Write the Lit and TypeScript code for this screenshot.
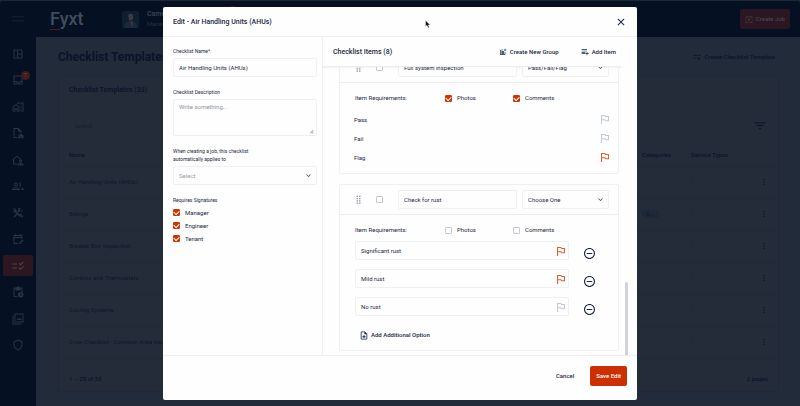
import { LitElement, html, css, svg, nothing, TemplateResult } from "lit";
import { customElement, property } from "lit/decorators.js";
import { classMap } from "lit/directives/class-map.js";

const paths: Record<string, string> = {
  flag: "M14 6l-1-2H5v17h2v-7h5l1 2h7V6h-6zm4 8h-4l-1-2H7V6h5l1 2h5v6z",
  group: "M17 19H5V7h7V5H5c-1.1 0-2 .9-2 2v12c0 1.1.9 2 2 2h12c1.1 0 2-.9 2-2v-7h-2zM19 2h-2v3h-3v2h3v3h2V7h3V5h-3zM7 9h8v2H7zM7 12h8v2H7zM7 15h8v2H7z",
  addItem: "M2 4h16v2H2zM2 8h16v2H2zM2 12h11v2H2zM2 16h11v2H2zM17 12h2v4h4v2h-4v4h-2v-4h-3v-2h3z",
  noteAdd: "M14 2H6c-1.1 0-2 .9-2 2v16c0 1.1.9 2 2 2h12c1.1 0 2-.9 2-2V8l-6-6zM6 20V4h7v5h5v11H6zM13 11h-2v3H8v2h3v3h2v-3h3v-2h-3z",
  minus: "M7 11v2h10v-2H7zm5-9C6.48 2 2 6.48 2 12s4.48 10 10 10 10-4.48 10-10S17.52 2 12 2zm0 18c-4.41 0-8-3.59-8-8s3.59-8 8-8 8 3.59 8 8-3.59 8-8 8z",
  close: "M19 6.4L17.6 5 12 10.6 6.4 5 5 6.4 10.6 12 5 17.6 6.4 19 12 13.4 17.6 19 19 17.6 13.4 12z",
  chevron: "M16.6 8.6L12 13.2 7.4 8.6 6 10l6 6 6-6z",
  drag: "M7 2h3v3H7zM14 2h3v3h-3zM7 8h3v3H7zM14 8h3v3h-3zM7 14h3v3H7zM14 14h3v3h-3zM7 20h3v3H7zM14 20h3v3h-3z",
  more: "M10 3h4v4h-4zM10 10h4v4h-4zM10 17h4v4h-4z",
  resize: "M20 8l2 2L10 22l-2-2zM20 16l2 2-4 4-2-2z",
  filter: "M10 18h4v-2h-4v2zM1 5v2h22V5H1zm4 7h14v-2H5v2z",
  menu: "M0 7h24v1.500H0zM0 15h24v1.500H0z",
  dashboard: "M3 3h18v18H3zM5 5v14h5V5zM12 5v6h7V5zM12 13v6h7v-6z",
  inbox: "M3 3h18v18H3zM5 5v9h4c.5 1.500 1.500 2.500 3 2.500s2.500-1 3-2.500h4V5zM5 16v3h14v-3h-2.500c-1 1.600-2.600 2.500-4.500 2.500S8.500 17.600 7.500 16z",
  homeWork: "M1 11.500L8 6l7 5.500V21H9v-5H7v5H1zM3 12.500V19h2v-5h6v5h2v-6.500L8 8.500zM10 3h13v18h-6v-2h4V5h-9v2l-2-1.500zM17 7h2v2h-2zM17 11h2v2h-2zM17 15h2v2h-2z",
  fileHome: "M3 2h10l6 6v4h-2V9h-5V4H5v16h6v2H3zM13 17l5-4 5 4v6h-4v-4h-2v4h-4z",
  homePerson: "M1 11L10 3l9 8-1.500 1.200L10 5.500 4 11v8h6v2H2v-8zM17 11a3 3 0 110 6 3 3 0 010-6zM17 13a1 1 0 100 2 1 1 0 000-2zM11 22c0-3 3-4 6-4s6 1 6 4v1H11zM13 21h8c-1-1.500-7-1.500-8 0z",
  people: "M8 5a4 4 0 110 8 4 4 0 010-8zm0 2a2 2 0 100 4 2 2 0 000-4zM0 20c0-4 4-5.500 8-5.500s8 1.500 8 5.500zM2 18h12c-1.500-2-10.500-2-12 0zM14 5a4 4 0 110 8v-2a2 2 0 000-4zM17 15c4 .5 7 2 7 5h-5v-2h2c-.5-1-2-1.500-4-2z",
  tools: "M2 4l3-2 4 4v3l9 9-2 2-9-9H5L1 7l3 1 2-2zM22 6l-3 3-3-1-1-3 3-3c-4-1-7 1-6 5l-2 2 2 2 2-2c4 1 6-1 5-3zM3 19l6-6 2 2-6 6zM15 14l2-1 6 6-2 3z",
  calendar: "M3 4h3V2h2v2h8V2h2v2h3v8h-2V10H5v10h7v2H3zM5 6v2h14V6zM14 20l7-7 2 2-7 7h-2z",
  checks: "M1 7h9v2H1zM1 15h9v2H1zM13 7l1.500-1.500L17 8l5-5 1.500 1.500L17 11zM13 16l1.500-1.500L17 17l5-5 1.500 1.500L17 20z",
  clipboard: "M3 3h5l2-2h4l2 2h5v9h-2V5h-2v4H7V5H5v15h6v2H3zM17.500 12a5.500 5.500 0 110 11 5.500 5.500 0 010-11zM17 14v4l3 2 .7-1-2.200-1.500V14z",
  photos: "M5 1h18v18H5zM7 3v14h14V3zM1 5h2v16h16v2H1zM9 14l3-4 2 2.500 2-3 4 4.500z",
  shield: "M12 1l9 4v6c0 6-4 10-9 12-5-2-9-6-9-12V5zM12 3L5 6.300V11c0 5 3 8 7 9.800 4-1.800 7-4.800 7-9.800V6.300z",
  template: "M1 6h13v2H1zM1 14h9v2H1zM17 3h2v5h-2zM19 6h4v2h-4zM16 13h2v3h4v2h-4v4h-2v-4h-3v-2h3z",
  job: "M2 5h4V2h2v3h8V2h2v3h4v5h-2V7H4v3H2zM2 13h2v3H2zM2 19h2v2h3v2H2zM10 21h4v2h-4zM17 21h3v-2h2v4h-5zM20 13h2v3h-2zM11 10h2v4h3l-4 4-4-4h3z",
};

const icon = (name: string, cls = "", box = "0 0 24 24") =>
  html`<svg class="icon ${cls}" viewBox=${box} aria-hidden="true">
    ${svg`<path fill="currentColor" fill-rule="evenodd" d=${paths[name]}></path>`}
  </svg>`;

const base = css`
  * { box-sizing: border-box; }
  button, input, select, textarea { font: inherit; color: inherit; margin: 0; }
  button { display: flex; align-items: center; border: 0; padding: 0; background: none; }
  .icon { display: block; flex: none; width: 10px; height: 10px; }
`;

@customElement("templates-page")
class TemplatesPage extends LitElement {
  static styles = [base, css`
    :host {
      display: flex; flex-direction: column; min-height: 100vh;
      background: #222b39; color: #08142a; font-size: 6px; line-height: 8px;
    }
    .top {
      display: flex; align-items: center; height: 37px; padding: 0 10px 0 12px;
      background: #051122; border-top: 1px solid #1c2a38; border-radius: 3px 3px 0 0;
      color: #3d4757;
    }
    .menu { width: 12px; height: 12px; color: #1b2c3c; }
    .logo { margin-left: 26px; width: 72px; font-size: 18px; line-height: 20px; font-weight: 500; color: #424c5c; }
    .logo span { box-shadow: 0 1px 0 #4b1d1d; }
    .avatar { width: 17px; height: 17px; margin-right: 8px; border-radius: 2px; background: #101f30; }
    .who { width: 82px; line-height: 9px; color: #253242; }
    .who b { display: block; font-size: 7px; font-weight: 500; color: #3d4757; }
    .dot { width: 7px; height: 7px; margin-top: -20px; border-radius: 50%; background: #43191d; }
    .job {
      margin-left: auto; height: 20px; padding: 0 5px; gap: 3px; border-radius: 2px;
      background: #2b1721; color: #4b4450; font-weight: 500;
    }
    .job .icon { width: 8px; height: 8px; }
    .body { display: flex; flex: 1; }
    nav {
      display: flex; flex-direction: column; justify-content: space-between; flex: none;
      width: 36px; padding: 6px 3px 50px; background: #051122;
    }
    .tab {
      position: relative; display: flex; align-items: center; justify-content: center;
      height: 21px; border-radius: 2px; color: #283545;
    }
    .tab .icon { width: 12px; height: 12px; }
    .tab.on { background: #2c1720; color: #4b4350; }
    .badge {
      position: absolute; right: 3px; top: 1px; width: 9px; height: 9px; border-radius: 50%;
      background: #451a1e; color: #6a4a50; font-size: 5px; line-height: 9px; text-align: center;
    }
    main { flex: 1; padding: 12px 21px 10px 22px; }
    .heading { display: flex; align-items: center; justify-content: space-between; padding-right: 4px; }
    h1 { margin: 0; font-size: 12px; line-height: 16px; font-weight: 700; }
    .create { gap: 3px; font-weight: 500; }
    .create .icon { width: 8px; height: 8px; }
    .panel { margin-top: 11px; padding: 0 3px; border: 1px solid #202938; border-radius: 3px; background: #242c3a; }
    h2 { margin: 0; padding: 9px 7px 0; font-size: 7px; line-height: 8px; font-weight: 500; }
    .tools { display: flex; justify-content: space-between; align-items: center; padding: 26px 9px 13px 12px; }
    .tools input { border: 0; padding: 0; background: none; }
    .tools input::placeholder { color: #111e31; opacity: 1; }
    .tools .icon { width: 12px; height: 12px; }
    table { width: 100%; border-collapse: collapse; table-layout: fixed; }
    th, td { padding: 0 7px; text-align: left; border-bottom: 1px solid #202937; white-space: nowrap; }
    th { height: 21px; font-weight: 500; }
    td { height: 32px; color: #0b172c; }
    th.c2, td.c2 { width: 49px; padding: 0; }
    th.c3, td.c3 { width: 69px; padding: 0; }
    th.c4, td.c4 { width: 15px; padding: 0; }
    .c4 .icon { width: 8px; height: 8px; }
    .chip { padding: 1px 4px; border-radius: 4px; background: #1d2939; }
    .foot { display: flex; justify-content: space-between; padding: 16px 7px 8px; font-weight: 500; }
  `];

  render() {
    const tabs = ["dashboard", "inbox", "homeWork", "fileHome", "homePerson", "people", "tools", "calendar", "checks", "clipboard", "photos", "shield"];
    const rows = [
      ["Air Handling Units (AHUs)", "-"], ["Billings", "A..."], ["Breaker Box Inspection", "-"],
      ["Controls and Thermostats", "-"], ["Cooling Systems", "-"], ["Crow Checklist - Common Area Inspection", "-"],
    ];
    return html`
      <header class="top">
        ${icon("menu", "menu")}
        <div class="logo"><span>F</span>yxt</div>
        <svg class="avatar" viewBox="0 0 17 17" aria-hidden="true">
          <path fill="#1b2938" d="M2 17c0-5 3-6 6-7l6 2 2 5z"></path>
          <path fill="#3b3b46" d="M6 4q3-3 5 0v4q-2 3-4 1zM8 11l3-1-1 6z"></path>
        </svg>
        <div class="who"><b>Cameron</b>Manager</div>
        <span class="dot"></span>
        <button class="job">${icon("job")}Create Job</button>
      </header>
      <div class="body">
        <nav>
          ${tabs.map((t) => html`<a class=${classMap({ tab: true, on: t === "checks" })} href="#${t}" aria-label=${t}>
            ${icon(t)}${t === "inbox" ? html`<span class="badge">7</span>` : nothing}</a>`)}
        </nav>
        <main>
          <div class="heading">
            <h1>Checklist Templates</h1>
            <button class="create">${icon("template")}Create Checklist Template</button>
          </div>
          <section class="panel">
            <h2>Checklist Templates (33)</h2>
            <div class="tools">
              <input type="search" placeholder="Search" aria-label="Search" />
              ${icon("filter")}
            </div>
            <table>
              <thead><tr><th>Name</th><th class="c2">Categories</th><th class="c3">Service Types</th><th class="c4"></th></tr></thead>
              <tbody>
                ${rows.map(([name, cat]) => html`<tr>
                  <td>${name}</td>
                  <td class="c2">${cat === "-" ? cat : html`<span class="chip">${cat}</span>`}</td>
                  <td class="c3">-</td>
                  <td class="c4">${icon("more")}</td>
                </tr>`)}
              </tbody>
            </table>
            <div class="foot"><span>1 – 25 of 33</span><span>2 pages</span></div>
          </section>
        </main>
      </div>`;
  }
}

const formStyles = css`
  .field {
    display: block; width: 100%; height: 19px; padding: 0 5px; border: 1px solid #eef0f3;
    border-radius: 2px; background: #fefefe; outline: 0; appearance: none;
  }
  .picker { position: relative; }
  .picker .icon { position: absolute; right: 4px; top: 5px; width: 9px; height: 9px; color: #3b465c; }
  .check { display: flex; align-items: center; gap: 5px; }
  .box {
    display: flex; flex: none; align-items: center; justify-content: center; width: 7px; height: 7px;
    border: 1px solid #c3c9d5; border-radius: 1px; background: #fff; appearance: none;
  }
  .box:checked { border-color: #d23300; background: #d23300; }
  .box:checked::after {
    content: ""; width: 5px; height: 3px; margin-top: -1px;
    border: solid #fff; border-width: 0 0 1px 1px; transform: rotate(-45deg);
  }
`;

@customElement("checklist-item")
class ChecklistItem extends LitElement {
  @property() name = "";
  @property() kind = "";
  @property({ type: Boolean }) required = false;
  @property({ attribute: false }) content: TemplateResult | typeof nothing = nothing;

  static styles = [base, formStyles, css`
    :host { display: block; flex: none; border: 1px solid #eef0f3; border-radius: 2px; }
    .head {
      display: grid; grid-template-columns: 20px 22px 1fr 92px; align-items: center;
      height: 30px; padding: 0 9px 0 16px; border-bottom: 1px solid #eceef2;
    }
    .head .picker { margin-left: 5px; }
    .drag { width: 9px; height: 9px; margin-left: -2px; color: #6b7485; }
    .needs {
      display: grid; grid-template-columns: 90px 68px 1fr; padding: 11px 15px 0; line-height: 8px;
    }
    .result { display: flex; align-items: center; justify-content: space-between; height: 19px; padding: 0 9px 0 14px; }
    .results { padding: 8px 0 6px; }
    .flag { width: 8px; height: 9px; color: #c1c9d8; }
    .flag.hot { color: #d9622f; }
    .options { display: grid; gap: 9px; padding: 7px 23px 0 15px; }
    .option { display: flex; align-items: flex-end; gap: 15px; }
    .text { position: relative; flex: 1; }
    .text .flag { position: absolute; right: 4px; top: 6px; }
    .minus { width: 11px; height: 11px; margin-bottom: 1px; }
    .add { gap: 3px; height: 12px; margin: 13px 0 9px 20px; font-weight: 500; }
    .add .icon { width: 8px; height: 9px; }
  `];

  render() {
    return html`
      <div class="head">
        ${icon("drag", "drag")}
        <input class="box" type="checkbox" aria-label="Select ${this.name}" />
        <input class="field" .value=${this.name} aria-label="Item name" />
        <div class="picker">
          <select class="field" aria-label="Item type"><option>${this.kind}</option></select>
          ${icon("chevron")}
        </div>
      </div>
      <div class="needs">
        <span>Item Requirements:</span>
        <label class="check"><input class="box" type="checkbox" .checked=${this.required} />Photos</label>
        <label class="check"><input class="box" type="checkbox" .checked=${this.required} />Comments</label>
      </div>
      ${this.content}`;
  }
}

const flagIcon = (hot: boolean) => icon("flag", hot ? "flag hot" : "flag", "5 4 15 17");

const results = html`<div class="results">
  ${["Pass", "Fail", "Flag"].map((r) => html`<div class="result">${r}${flagIcon(r === "Flag")}</div>`)}
</div>`;

const options = html`
  <div class="options">
    ${["Significant rust", "Mild rust", "No rust"].map((o) => html`<div class="option">
      <div class="text"><input class="field" .value=${o} aria-label="Option" />${flagIcon(o !== "No rust")}</div>
      <button aria-label="Remove ${o}">${icon("minus", "minus", "2 2 20 20")}</button>
    </div>`)}
  </div>
  <button class="add">${icon("noteAdd", "", "3 1 18 22")}Add Additional Option</button>`;

@customElement("edit-dialog")
class EditDialog extends LitElement {
  static styles = [base, formStyles, css`
    :host {
      display: flex; flex-direction: column; width: 59.25%; min-height: 0;
      border-radius: 2px; background: #fefefe; color: #1b2842; overflow: hidden;
      font-size: 6px; line-height: 8px;
    }
    .title {
      display: flex; align-items: center; justify-content: space-between; flex: none;
      height: 30px; padding: 0 10px; border-bottom: 1px solid #eff0f3;
    }
    h2, h3 { margin: 0; font-size: 7px; line-height: 10px; font-weight: 500; }
    .title .icon { width: 12px; height: 12px; }
    .columns { display: grid; grid-template-columns: 160px 1fr; flex: 1; min-height: 0; }
    .side { padding: 10px 5px 0 10px; border-right: 1px solid #eff0f3; }
    .label { display: block; margin: 11px 0 3px; font-size: 5px; line-height: 8px; }
    .label:first-child { margin-top: 0; }
    .area { position: relative; }
    .area .field { height: 37px; padding: 3px 5px; resize: none; }
    .area .icon { position: absolute; right: 3px; bottom: 2px; width: 6px; height: 6px; color: #7c8494; }
    .field::placeholder { color: #8d95a4; opacity: 1; }
    .empty { color: #9a9fa9; }
    .side .check { height: 13px; }
    .signs { margin-top: -1px; }
    fieldset { margin: 11px 0 0; padding: 0; border: 0; }
    legend { padding: 0; }
    .items { display: flex; flex-direction: column; min-width: 0; min-height: 0; }
    .bar {
      display: flex; align-items: center; flex: none; gap: 22px; height: 30px; margin-right: 16px;
      padding: 0 5px 0 10px; border-bottom: 1px solid #eceef1; box-shadow: 0 1px 1px #f3f4f6;
    }
    .bar h3 { margin-right: auto; }
    .bar button { gap: 3px; font-weight: 500; }
    .bar .icon { width: 8px; height: 8px; }
    .scroll { display: flex; flex: 1; min-height: 0; }
    .list {
      display: flex; flex-direction: column; justify-content: flex-end; flex: 1; gap: 10px;
      min-width: 0; padding: 0 6px 4px 16px; overflow: hidden;
    }
    .thumb { align-self: flex-end; width: 3px; height: 73px; margin-right: 9px; border-radius: 2px 2px 0 0; background: #cfd3dd; }
    footer {
      display: flex; align-items: center; justify-content: flex-end; flex: none; gap: 16px;
      height: 45px; padding: 0 10px 4px; border-top: 1px solid #eceef1; font-weight: 500;
    }
    .save { height: 20px; padding: 0 6px; border-radius: 2px; background: #cd3000; color: #fff; }
    .pointer { position: absolute; left: 53.125%; top: 20px; width: 6px; height: 8px; }
  `];

  render() {
    return html`
      <header class="title">
        <h2>Edit - Air Handling Units (AHUs)</h2>
        <button aria-label="Close">${icon("close")}</button>
      </header>
      <div class="columns">
        <form class="side">
          <label class="label" for="name">Checklist Name*</label>
          <input class="field" id="name" .value=${"Air Handling Units (AHUs)"} />
          <label class="label" for="about">Checklist Description</label>
          <div class="area">
            <textarea class="field" id="about" placeholder="Write something..."></textarea>
            ${icon("resize")}
          </div>
          <label class="label" for="applies">When creating a job, this checklist<br />automatically applies to</label>
          <div class="picker">
            <select class="field empty" id="applies"><option>Select</option></select>
            ${icon("chevron")}
          </div>
          <fieldset>
            <legend class="label">Requires Signatures</legend>
            <div class="signs">
              ${["Manager", "Engineer", "Tenant"].map((s) => html`<label class="check"><input class="box" type="checkbox" checked />${s}</label>`)}
            </div>
          </fieldset>
        </form>
        <section class="items">
          <div class="bar">
            <h3>Checklist Items (8)</h3>
            <button>${icon("group")}Create New Group</button>
            <button>${icon("addItem")}Add Item</button>
          </div>
          <div class="scroll">
            <div class="list">
              <checklist-item name="Full system inspection" kind="Pass/Fail/Flag" required .content=${results}></checklist-item>
              <checklist-item name="Check for rust" kind="Choose One" .content=${options}></checklist-item>
            </div>
            <div class="thumb"></div>
          </div>
        </section>
      </div>
      <footer>
        <button>Cancel</button>
        <button class="save">Save Edit</button>
      </footer>
      <svg class="pointer" viewBox="0 0 6 8" aria-hidden="true">
        <path fill="#111" stroke="#fff" stroke-width=".4" d="M.5.500v6L2 5.300l1 2.400 1.200-.5-1-2.300h2z"></path>
      </svg>`;
  }
}

@customElement("app-root")
class AppRoot extends LitElement {
  static styles = css`
    :host { display: block; position: relative; overflow: hidden; font-family: Roboto, "Liberation Sans", sans-serif; }
    .overlay {
      position: absolute; inset: 0; display: flex; justify-content: center; padding: 7px 0 6px;
    }
  `;

  render() {
    return html`
      <templates-page></templates-page>
      <div class="overlay" role="dialog" aria-label="Edit checklist"><edit-dialog></edit-dialog></div>`;
  }
}
